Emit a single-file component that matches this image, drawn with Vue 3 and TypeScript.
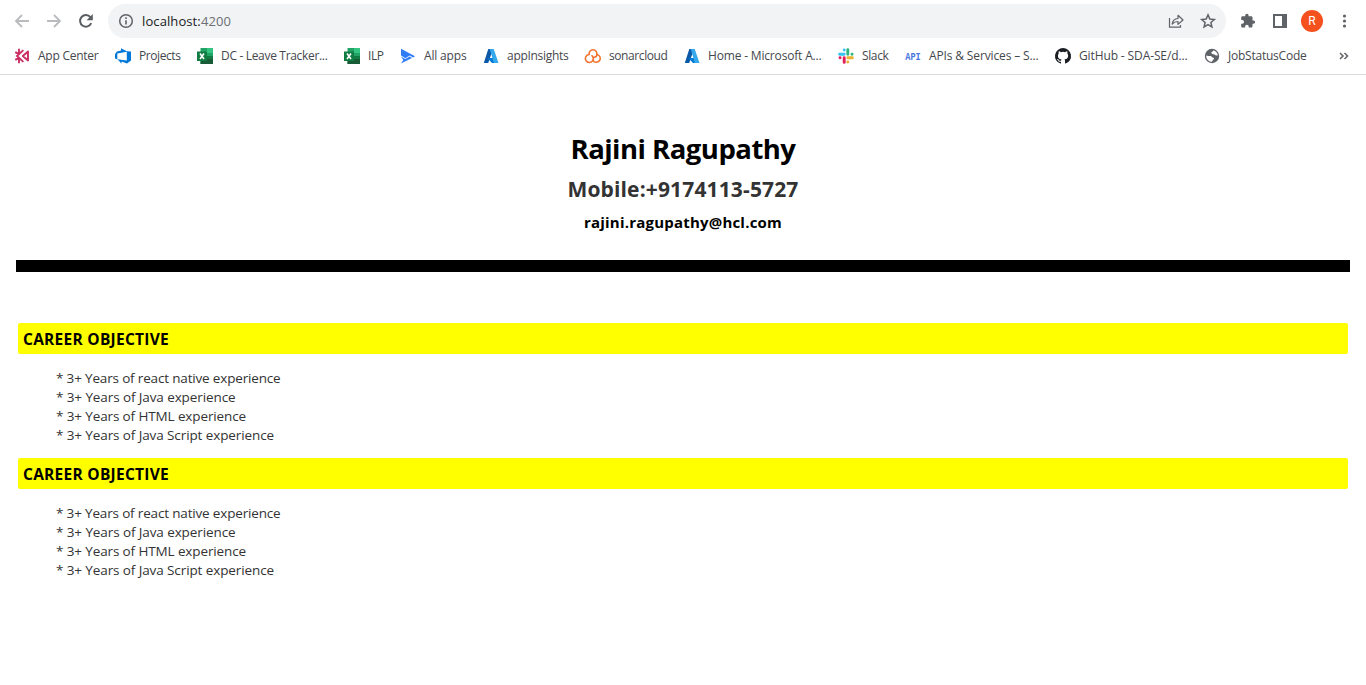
<script setup lang="ts">
import type { Directive } from 'vue'

interface Bookmark {
  icon: string
  label: string
  width: number
}

interface Line {
  text: string
  width: number
}

const bookmarks: Bookmark[] = [
  { icon: 'appcenter', label: 'App Center', width: 61 },
  { icon: 'devops', label: 'Projects', width: 42 },
  { icon: 'excel', label: 'DC - Leave Tracker...', width: 107 },
  { icon: 'excel', label: 'ILP', width: 16 },
  { icon: 'allapps', label: 'All apps', width: 43 },
  { icon: 'azure', label: 'appInsights', width: 62 },
  { icon: 'sonar', label: 'sonarcloud', width: 59 },
  { icon: 'azure', label: 'Home - Microsoft A...', width: 114 },
  { icon: 'slack', label: 'Slack', width: 27 },
  { icon: 'api', label: 'APIs & Services – S...', width: 110 },
  { icon: 'github', label: 'GitHub - SDA-SE/d...', width: 109 },
  { icon: 'globe', label: 'JobStatusCode', width: 79 },
]

const experience: Line[] = [
  { text: '* 3+ Years of react native experience', width: 224.5 },
  { text: '* 3+ Years of Java experience', width: 179.5 },
  { text: '* 3+ Years of HTML experience', width: 190 },
  { text: '* 3+ Years of Java Script experience', width: 218 },
]

const sections = [
  { title: 'CAREER OBJECTIVE', lines: experience },
  { title: 'CAREER OBJECTIVE', lines: experience },
]

// Tracks the text so that it fills the given width.
const vFit: Directive<HTMLElement, number> = {
  mounted(el, { value }) {
    const natural = el.getBoundingClientRect().width
    const count = (el.textContent ?? '').length
    el.style.letterSpacing = `${(value - natural) / count}px`
  },
}
</script>

<template>
  <div class="window">
    <header class="browser">
      <div class="toolbar">
        <div class="nav">
          <svg class="ic" viewBox="0 0 16 16"><path d="M15 8H2M8 2L2 8l6 6" fill="none" stroke="#b9bbbe" stroke-width="1.8" /></svg>
          <svg class="ic" viewBox="0 0 16 16"><path d="M1 8h13M8 2l6 6-6 6" fill="none" stroke="#b9bbbe" stroke-width="1.8" /></svg>
          <svg class="ic" viewBox="0 0 16 16"><path d="M13.200 10.200A5.800 5.800 0 1 1 12.400 4.200" fill="none" stroke="#5a5e63" stroke-width="2" /><path d="M14.800 1v6.200H8.600z" fill="#5a5e63" /></svg>
        </div>
        <div class="omnibox">
          <svg class="ic" viewBox="0 0 16 16"><circle cx="8" cy="8" r="6.300" fill="none" stroke="#5f6368" stroke-width="1.500" /><path d="M8 7.200v4.200M8 4.300v1.600" stroke="#5f6368" stroke-width="1.600" /></svg>
          <div class="url"><span v-fit="89">localhost:<span class="port">4200</span></span></div>
          <svg class="ic share" viewBox="0 0 16 16"><path d="M1.500 5v9.200h11V12" fill="none" stroke="#5f6368" stroke-width="1.200" /><path d="M4.200 11c.4-3.800 2.300-5.300 5.800-5.500V2.300L15 7l-5 4.400V8.500C7.300 8.500 5.700 9.200 4.200 11z" fill="none" stroke="#5f6368" stroke-width="1.200" stroke-linejoin="round" /></svg>
          <svg class="ic" viewBox="0 0 16 16"><path d="M8 1.900l1.800 4.200 4.500.4-3.400 3 1 4.400L8 11.600l-3.900 2.300 1-4.400-3.400-3 4.500-.4z" fill="none" stroke="#5f6368" stroke-width="1.500" /></svg>
        </div>
        <div class="actions">
          <svg class="ic" viewBox="0 0 16 16"><path d="M13.500 7.400h-1V4.600c0-.7-.6-1.300-1.300-1.300H8.600V2.400a1.700 1.700 0 0 0-3.400 0v.9H2.500c-.7 0-1.300.6-1.300 1.300v2.500h1a1.800 1.800 0 0 1 0 3.600h-1v2.600c0 .7.600 1.300 1.300 1.300h2.600v-1a1.800 1.800 0 0 1 3.600 0v1h2.500c.7 0 1.300-.6 1.300-1.300v-2.600h1a1.650 1.650 0 0 0 0-3.300z" fill="#5f6368" /></svg>
          <svg class="ic" viewBox="0 0 16 16"><path d="M1 1h14v14H1zM3 3v10h7V3z" fill="#5f6368" fill-rule="evenodd" /></svg>
          <div class="avatar">R</div>
          <svg class="ic" viewBox="0 0 16 16"><g fill="#5f6368"><circle cx="7.500" cy="3" r="1.600" /><circle cx="7.500" cy="8" r="1.600" /><circle cx="7.500" cy="13" r="1.600" /></g></svg>
        </div>
      </div>

      <nav class="bookmarks">
        <div v-for="(b, i) in bookmarks" :key="i" class="bookmark">
          <svg class="ic" viewBox="0 0 16 16">
            <g v-if="b.icon === 'appcenter'">
              <path d="M14 3.500L8.800 8l5.200 4.500z" fill="#fff" stroke="#cb2e63" stroke-width="1.900" stroke-linejoin="round" />
              <path d="M8.800 2.600L3 8l5.800 5.400" fill="none" stroke="#cb2e63" stroke-width="1.900" stroke-linecap="round" />
              <path d="M5 1.500v4.300L1.900 4.500M5 14.500v-4.300l-3.100 1.300" fill="none" stroke="#cb2e63" stroke-width="1.900" stroke-linecap="round" stroke-linejoin="round" />
            </g>
            <g v-else-if="b.icon === 'devops'">
              <path d="M0 6l2-2.600 4-.9V.3l5.800 2.900L16 3.600v8.900l-4 3-5.500-2v2.300L2.800 11.500 0 10.600z" fill="#0078d7" />
              <path d="M2.300 5.600l9.500-1.800v8.700l-9.500-1.200z" fill="#fff" />
            </g>
            <g v-else-if="b.icon === 'excel'">
              <path d="M3.500 0H16v16H3.500z" fill="#21a366" />
              <path d="M10 0h6v5h-6z" fill="#33c481" />
              <path d="M3.500 5H10v6H3.500z" fill="#107c41" />
              <path d="M3.500 10.500H16V16H3.500z" fill="#185c37" />
              <path d="M10 8h6v3h-6z" fill="#107c41" />
              <rect y="3.500" width="10" height="9.500" fill="#107c41" />
              <path d="M3 5.500l4 5.500M7 5.500L3 11" stroke="#fff" stroke-width="1.600" />
            </g>
            <g v-else-if="b.icon === 'allapps'" fill="#2f7df6">
              <path d="M1 .8L15 8.200l-2 1.200-3.200-2-4.400 2.800L1 7.600z" />
              <path d="M1 8.500l4.300 2.600 4.500-2.700 2.200 1.500L1 15.600l2.300-3.500z" />
            </g>
            <g v-else-if="b.icon === 'azure'">
              <path d="M5.300 1H10L5.200 15H.8z" fill="#0b59a6" />
              <path d="M4.300 10h7l1.300 5H9z" fill="#0078d4" />
              <path d="M6.800 1H10.700L15.500 15h-4.700z" fill="#35a8ec" />
            </g>
            <g v-else-if="b.icon === 'sonar'" fill="none" stroke="#f3702a" stroke-width="1.500" stroke-linecap="round">
              <path d="M4.100 6.400A3.950 3.950 0 1 1 11.900 6.400C11.900 8 10.700 9.200 9.200 9.300" />
              <path d="M4.100 6.400A4 4 0 1 0 7.900 12.300C8.700 10.700 8.300 8.800 6.900 7.700" />
              <path d="M11.900 6.400A3.950 3.950 0 1 1 7.900 12.300" />
            </g>
            <g v-else-if="b.icon === 'slack'" stroke-width="2.900" stroke-linecap="round">
              <path d="M6.200 2v.1M1.600 6.200h4.600" stroke="#36c5f0" />
              <path d="M9.800 1.600v4.600M14 6.200h.1" stroke="#2eb67d" />
              <path d="M9.800 9.800h4.600M9.800 14v.1" stroke="#ecb22e" />
              <path d="M6.200 9.800v4.600M2 9.800h.1" stroke="#e01e5a" />
            </g>
            <text v-else-if="b.icon === 'api'" class="api" x="0.300" y="12" textLength="15.400" lengthAdjust="spacingAndGlyphs">API</text>
            <path v-else-if="b.icon === 'github'" d="M8 0a8 8 0 0 0-2.530 15.590c.4.070.55-.17.55-.38v-1.490c-2.010.37-2.530-.49-2.690-.94-.09-.23-.48-.94-.82-1.130-.28-.15-.68-.52-.01-.53.63-.01 1.080.58 1.230.82.72 1.210 1.870.87 2.330.66.070-.52.28-.87.51-1.070-1.780-.2-3.640-.89-3.640-3.950 0-.87.31-1.590.82-2.150-.08-.2-.36-1.020.08-2.120 0 0 .67-.21 2.200.82a7.420 7.420 0 0 1 4 0c1.530-1.040 2.200-.82 2.200-.82.44 1.100.16 1.920.08 2.120.51.56.82 1.270.82 2.150 0 3.070-1.870 3.750-3.650 3.950.29.25.54.73.54 1.480v2.200c0 .21.150.46.55.38A8 8 0 0 0 8 0z" fill="#1b1f23" />
            <g v-else>
              <circle cx="8" cy="8" r="7.200" fill="#5f6368" />
              <path d="M2.200 7.600c1.800.6 2.700.2 4.200.3 1.600.1 1.400 1.700 3 1.900.9.100.7 1.500-.2 2-.9.500-.5 1.400-1.600 2.100-3.200-.2-5.600-3-5.400-6.300z" fill="#fff" />
              <path d="M9.200 2.300c.3 1-.8 1.300-1.500 1.700-.8.500-.3 1.300.3 1.700.9.600 2.200.2 2.900 1.100.6.800 1.700.9 2.900.5-.3-2.500-2.100-4.500-4.600-5z" fill="#fff" />
            </g>
          </svg>
          <div class="label" :style="{ width: b.width + 'px' }"><span v-fit="b.width - 0.5">{{ b.label }}</span></div>
        </div>
        <svg class="more" viewBox="0 0 10 8"><path d="M1 1l3 3-3 3M5.500 1l3 3-3 3" fill="none" stroke="#5f6368" stroke-width="1.500" /></svg>
      </nav>
    </header>

    <main class="resume">
      <div class="person">
        <h1><span v-fit="225">Rajini Ragupathy</span></h1>
        <h2><span v-fit="231">Mobile:+9174113-5727</span></h2>
        <h3><span v-fit="198">rajini.ragupathy@hcl.com</span></h3>
      </div>
      <div class="rule"></div>
      <section v-for="(s, i) in sections" :key="i">
        <h4><span v-fit="146">{{ s.title }}</span></h4>
        <ul>
          <li v-for="line in s.lines" :key="line.text"><span v-fit="line.width">{{ line.text }}</span></li>
        </ul>
      </section>
    </main>
  </div>
</template>

<style>
body {
  margin: 0;
  background: #fff;
  overflow: hidden;
}
</style>

<style scoped>
.window {
  height: 685px;
  font-family: "Open Sans", "Noto Sans", sans-serif;
  background: #fff;
}
.ic {
  display: block;
  width: 16px;
  height: 16px;
  flex: none;
  overflow: visible;
}
.browser {
  box-sizing: border-box;
  height: 75px;
  border-bottom: 1px solid #d9dadc;
}
.toolbar {
  display: flex;
  align-items: center;
  height: 42px;
}
.nav {
  display: flex;
  gap: 16px;
  width: 94px;
  padding-left: 14px;
}
.omnibox {
  box-sizing: border-box;
  display: flex;
  align-items: center;
  width: 1118px;
  height: 34px;
  padding: 0 10px;
  border-radius: 17px;
  background: #f1f3f4;
}
.url {
  flex: 1;
  padding-left: 8px;
  font-size: 13px;
  line-height: 18px;
  color: #202124;
  white-space: nowrap;
}
.port {
  color: #6b6f74;
}
.share {
  margin-right: 16px;
}
.actions {
  display: flex;
  align-items: center;
  padding-left: 14px;
}
.actions .ic + .ic {
  margin-left: 16px;
}
.avatar {
  width: 22px;
  height: 22px;
  margin: 0 14px 0 13px;
  border-radius: 50%;
  background: #f4511e;
  color: #fff;
  font: 12px/22px Roboto, sans-serif;
  text-align: center;
}
.bookmarks {
  display: flex;
  align-items: center;
  gap: 16px;
  height: 28px;
  padding-left: 14px;
}
.bookmark {
  display: flex;
  align-items: center;
  gap: 8px;
}
.label {
  font-size: 12px;
  line-height: 16px;
  color: #44484c;
  white-space: nowrap;
}
.api {
  font: bold 11px "Liberation Mono", monospace;
  fill: #4b78e0;
}
.more {
  width: 10px;
  height: 8px;
  margin-left: 16px;
}
.resume {
  padding: 53px 16px 0;
}
.person {
  text-align: center;
  white-space: nowrap;
}
h1,
h2,
h3,
h4,
ul {
  margin: 0;
  padding: 0;
}
h1 {
  font-size: 27.500px;
  line-height: 41px;
  color: #000;
}
h2 {
  font-size: 21px;
  line-height: 40px;
  color: #333;
}
h3 {
  font-size: 15px;
  line-height: 26px;
  color: #000;
}
.rule {
  height: 12px;
  margin: 25px 0 51px;
  background: #000;
}
h4 {
  height: 31px;
  margin: 0 2px;
  padding-left: 5px;
  border-radius: 2px;
  background: #ff0;
  font-size: 15.500px;
  line-height: 33px;
  color: #000;
}
ul {
  margin: 0 0 13px 40px;
  padding-top: 15px;
  list-style: none;
}
li {
  height: 19px;
  font-size: 13.500px;
  line-height: 19px;
  color: #333;
  white-space: nowrap;
}
</style>
